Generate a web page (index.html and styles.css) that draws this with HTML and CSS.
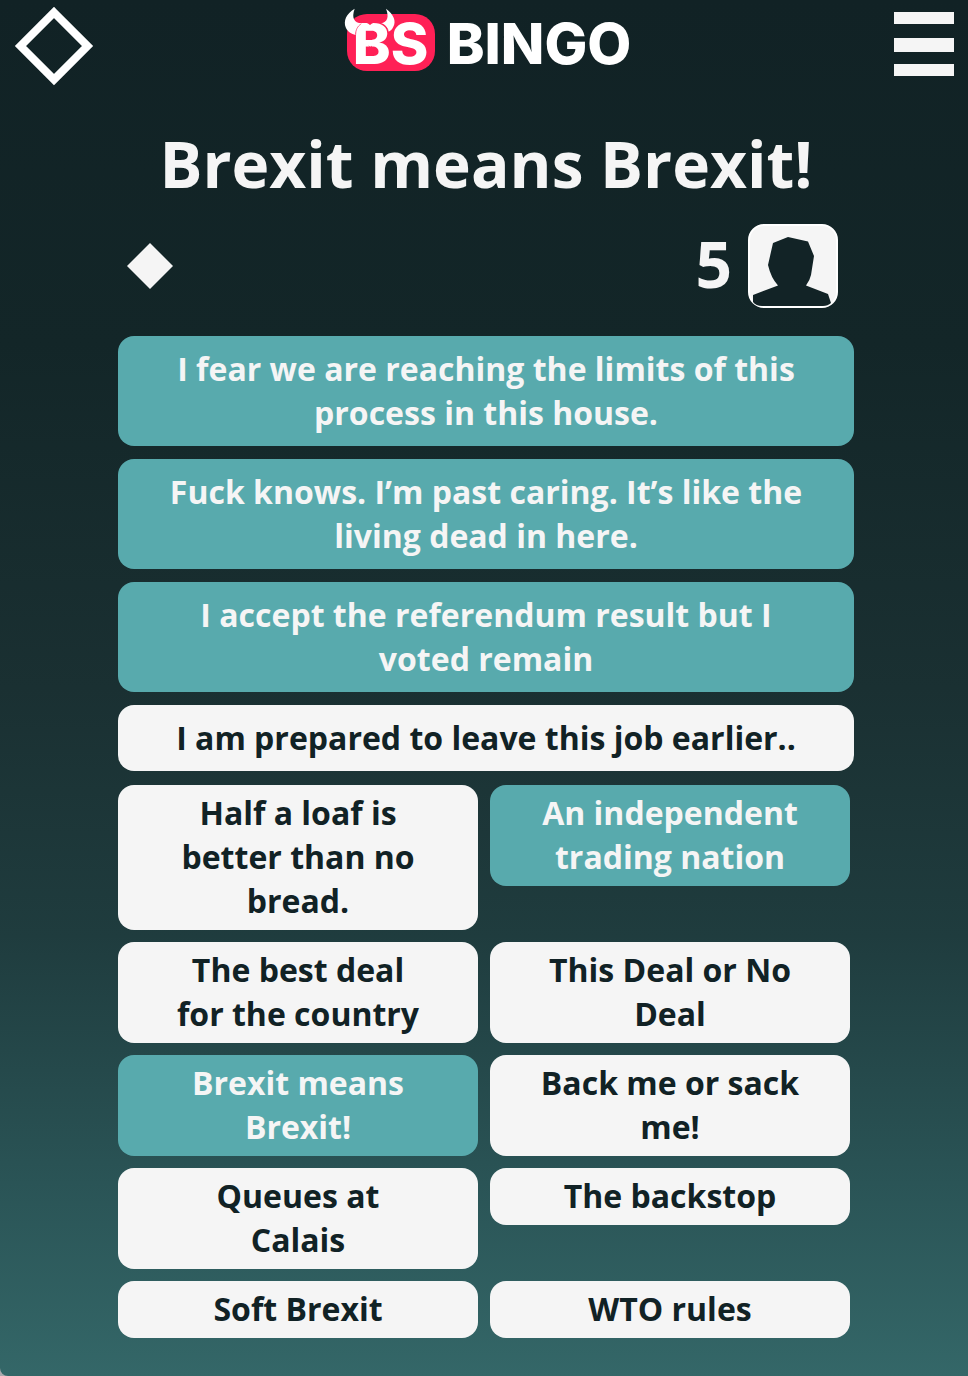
FILE: index.html
```html
<!DOCTYPE html>
<html lang="en">
<head>
<meta charset="utf-8">
<meta name="viewport" content="width=device-width, initial-scale=1">
<title>BS Bingo</title>
<link rel="stylesheet" href="styles.css">
</head>
<body>
<div class="page">
  <header class="topbar">
    <button class="icon-button" type="button" aria-label="Home">
      <svg width="80" height="80" viewBox="0 0 80 80"><path d="M40 6.500 73.500 40 40 73.500 6.500 40Z" fill="none" stroke="#fff" stroke-width="8"/></svg>
    </button>
    <a class="logo" href="#">
      <span class="logo-badge">BS
        <svg class="horns" width="60" height="60" viewBox="0 18 180 180" aria-hidden="true">
          <path d="M58 60H112L96 68Q90 69 84 75 78 69 72 68Z" fill="#ff2056"/>
          <g fill="#fff"><path d="M38 26C12 42 4 62 11 82 17 96 28 102 41 105 41 90 46 78 59 70 36 68 28 54 38 26Z"/><path d="M132 26C156 44 163 64 154 80 151 88 145 92 139 95 138 84 130 74 117 70 136 66 142 52 132 26Z"/></g>
          <path d="M41 104C41 90 46 79 58 71M139 97C138 84 130 75 118 71M80 138 85 142 90 138" fill="none" stroke="#ff2056" stroke-width="2"/>
        </svg>
      </span>
      <span class="logo-word">BINGO</span>
    </a>
    <button class="icon-button menu-button" type="button" aria-label="Menu">
      <svg width="60" height="64" viewBox="0 0 60 64" fill="#f5f5f5"><path d="M0 0H60V12H0ZM0 26H60V40H0ZM0 52H60V64H0Z"/></svg>
    </button>
  </header>
  <main class="game">
    <h1 class="title">Brexit means Brexit!</h1>
    <div class="status">
      <svg width="46" height="46" viewBox="0 0 46 46" fill="#f5f5f5" aria-hidden="true"><path d="M23 0 46 23 23 46 0 23Z"/></svg>
      <div class="players">
        <span class="count">5</span>
        <svg width="90" height="84" viewBox="0 0 90 84" role="img" aria-label="Players"><rect x="1" y="1" width="88" height="82" rx="15" fill="#f5f5f5" stroke="#fff" stroke-width="2"/><path d="M40 13 60 17.500 66 32 63 51Q62 56 58 61.500L80 70 83 79Q80 82 75 82H14Q8 82 5 78V71L30 61.500Q23 54 20 41L25 19Z" fill="#122326"/></svg>
      </div>
    </div>
    <div class="wide-cards">
      <button type="button" class="card marked">I fear we are reaching the limits of this process in this house.</button>
      <button type="button" class="card marked">Fuck knows. I’m past caring. It’s like the living dead in here.</button>
      <button type="button" class="card marked">I accept the referendum result but I voted remain</button>
      <button type="button" class="card">I am prepared to leave this job earlier..</button>
    </div>
    <div class="small-cards">
      <button type="button" class="card">Half a loaf is better than no bread.</button>
      <button type="button" class="card marked">An independent trading nation</button>
      <button type="button" class="card">The best deal for the country</button>
      <button type="button" class="card">This Deal or No Deal</button>
      <button type="button" class="card marked">Brexit means Brexit!</button>
      <button type="button" class="card">Back me or sack me!</button>
      <button type="button" class="card">Queues at Calais</button>
      <button type="button" class="card">The backstop</button>
      <button type="button" class="card">Soft Brexit</button>
      <button type="button" class="card">WTO rules</button>
    </div>
  </main>
</div>
</body>
</html>
```
FILE: styles.css
```css
* { box-sizing: border-box; }
html { background: #a9a9ad; }
body {
  margin: 0;
  font-family: "Open Sans", "Noto Sans", sans-serif;
  font-weight: 700;
  color: #f5f5f5;
}
.page {
  min-height: 100vh;
  border-bottom-left-radius: 8px;
  background: linear-gradient(#112225 0%, #132628 25%, #1a3032 50%, #1f3c3e 68%, #2a5456 86%, #346768 100%);
}
.topbar {
  display: flex;
  justify-content: space-between;
  align-items: flex-start;
  padding: 6px 14px 0;
}
.icon-button {
  padding: 0;
  border: 0;
  background: none;
  cursor: pointer;
}
.icon-button svg { display: block; }
.menu-button { padding: 6px 0 0 10px; }
.logo {
  display: flex;
  gap: 12px;
  padding-top: 8px;
  color: #fff;
  text-decoration: none;
  font-family: Inter, "Liberation Sans", sans-serif;
  font-size: 57px;
  font-weight: 800;
  line-height: 59px;
}
.logo-badge {
  position: relative;
  width: 88px;
  height: 57px;
  text-align: center;
  border-radius: 20px;
  background: #ff2056;
}
.horns {
  position: absolute;
  left: -5px;
  top: -8px;
}
.game {
  padding: 0 114px 34px 118px;
}
.title {
  margin: 36px 0 18px;
  font-size: 64px;
  line-height: 84px;
  text-align: center;
}
.status {
  display: flex;
  justify-content: space-between;
  align-items: center;
  padding: 0 16px 0 9px;
}
.players {
  display: flex;
  align-items: flex-start;
  gap: 16px;
}
.count {
  font-size: 64px;
  line-height: 80px;
}
.players svg { display: block; }
.wide-cards {
  display: flex;
  flex-direction: column;
  gap: 13px;
  margin: 28px 0 14px;
}
.small-cards {
  display: grid;
  grid-template-columns: 1fr 1fr;
  align-items: start;
  gap: 12px;
  margin-right: 4px;
}
.card {
  border: 0;
  border-radius: 16px;
  padding: 6px 50px 7px;
  background: #f5f5f5;
  color: #112225;
  font: inherit;
  font-size: 32px;
  line-height: 44px;
  text-align: center;
  cursor: pointer;
}
.wide-cards .card { padding: 11px 50px; }
.marked {
  background: #58aaad;
  color: #f5f5f5;
}
```
